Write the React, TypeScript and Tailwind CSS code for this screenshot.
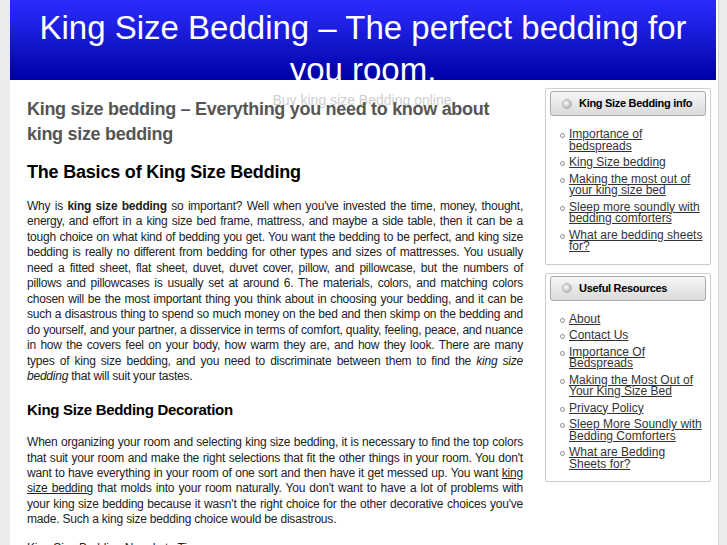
import React from 'react'

const infoLinks = [
  'Importance of bedspreads',
  'King Size bedding',
  'Making the most out of your king size bed',
  'Sleep more soundly with bedding comforters',
  'What are bedding sheets for?',
]

const resourceLinks = [
  'About',
  'Contact Us',
  'Importance Of Bedspreads',
  'Making the Most Out of Your King Size Bed',
  'Privacy Policy',
  'Sleep More Soundly with Bedding Comforters',
  'What are Bedding Sheets for?',
]

function SideBox({ title, links }: { title: string; links: string[] }) {
  return (
    <div className="border border-[#cfcfcf] rounded-[2px] px-[4px] pt-[2px] pb-[11px] mb-[8px] shadow-[0_0_1px_#ddd]">
      <div className="flex items-center h-[25px] border border-[#a9a9a9] rounded-[3px] bg-gradient-to-b from-[#f7f7f7] to-[#dadada]">
        <span className="ml-[11px] mr-[7px] w-[10px] h-[10px] rounded-full bg-[radial-gradient(circle_at_40%_40%,#ffffff,#9a9a9a)] border border-[#b5b5b5]" />
        <span className="text-[11px] font-bold text-black tracking-[-0.3px]">{title}</span>
      </div>
      <ul className="mt-[13px] pl-[10px] flex flex-col gap-[5px]">
        {links.map((l) => (
          <li key={l} className="flex items-start">
            <span className="mt-[4px] mr-[4px] w-[5px] h-[5px] shrink-0 rounded-full border border-[#8a8a8a]" />
            <a className="text-[12px] leading-[11.5px] text-[#333] underline underline-offset-[1px] pr-[2px]" href="#">
              {l}
            </a>
          </li>
        ))}
      </ul>
    </div>
  )
}

export default function App() {
  return (
    <div className="min-h-screen bg-[#ececec] font-['Liberation_Sans',Arial,sans-serif]">
      <div className="ml-[10px] w-[709px] min-h-screen bg-white border-r border-[#d8d8d8] overflow-hidden">
        <header className="h-[80px] bg-gradient-to-b from-[#2b2bff] to-[#0000a6] pt-[7px] mr-[2px]">
          <h1 className="text-white text-[33px] leading-[42px] text-center px-[8px]">
            King Size Bedding – The perfect bedding for you room.
          </h1>
        </header>
        <div className="mt-[12px] -mb-[28px] text-center text-[14px] text-[#cfcfcf] leading-[16px] pr-[4px]">
          Buy king size Bedding online
        </div>
        <div className="flex">
          <main className="w-[496px] ml-[17px] text-[#222]">
            <h2 className="mt-[17px] text-[18px] leading-[25px] font-bold text-[#555] tracking-[-0.3px]">
              King size bedding – Everything you need to know about king size bedding
            </h2>
            <h3 className="mt-[13px] text-[18px] leading-[25px] font-bold text-black tracking-[-0.2px]">
              The Basics of King Size Bedding
            </h3>
            <p className="mt-[14px] text-[12px] leading-[15.45px] text-justify tracking-[-0.23px]">
              Why is <b>king size bedding</b> so important? Well when you've invested the time, money, thought,
              energy, and effort in a king size bed frame, mattress, and maybe a side table, then it can be a tough
              choice on what kind of bedding you get. You want the bedding to be perfect, and king size bedding is
              really no different from bedding for other types and sizes of mattresses. You usually need a fitted
              sheet, flat sheet, duvet, duvet cover, pillow, and pillowcase, but the numbers of pillows and
              pillowcases is usually set at around 6. The materials, colors, and matching colors chosen will be the
              most important thing you think about in choosing your bedding, and it can be such a disastrous thing
              to spend so much money on the bed and then skimp on the bedding and do yourself, and your partner, a
              disservice in terms of comfort, quality, feeling, peace, and nuance in how the covers feel on your
              body, how warm they are, and how they look. There are many types of king size bedding, and you need
              to discriminate between them to find the <i>king size bedding</i> that will suit your tastes.
            </p>
            <h3 className="mt-[16px] text-[15px] leading-[20px] font-bold text-black tracking-[-0.3px]">
              King Size Bedding Decoration
            </h3>
            <p className="mt-[15px] text-[12px] leading-[15.3px] text-justify tracking-[-0.2px]">
              When organizing your room and selecting king size bedding, it is necessary to find the top colors that
              suit your room and make the right selections that fit the other things in your room. You don't want
              to have everything in your room of one sort and then have it get messed up. You want{' '}
              <a href="#" className="underline">king size bedding</a> that molds into your room naturally. You
              don't want to have a lot of problems with your king size bedding because it wasn't the right choice
              for the other decorative choices you've made. Such a king size bedding choice would be disastrous.
            </p>
            <p className="mt-[14px] text-[12px] leading-[15.3px] tracking-[-0.2px]">King Size Bedding Neophyte Tips</p>
          </main>
          <aside className="ml-[22px] mt-[8px] w-[166px]">
            <SideBox title="King Size Bedding info" links={infoLinks} />
            <SideBox title="Useful Resources" links={resourceLinks} />
          </aside>
        </div>
      </div>
    </div>
  )
}
